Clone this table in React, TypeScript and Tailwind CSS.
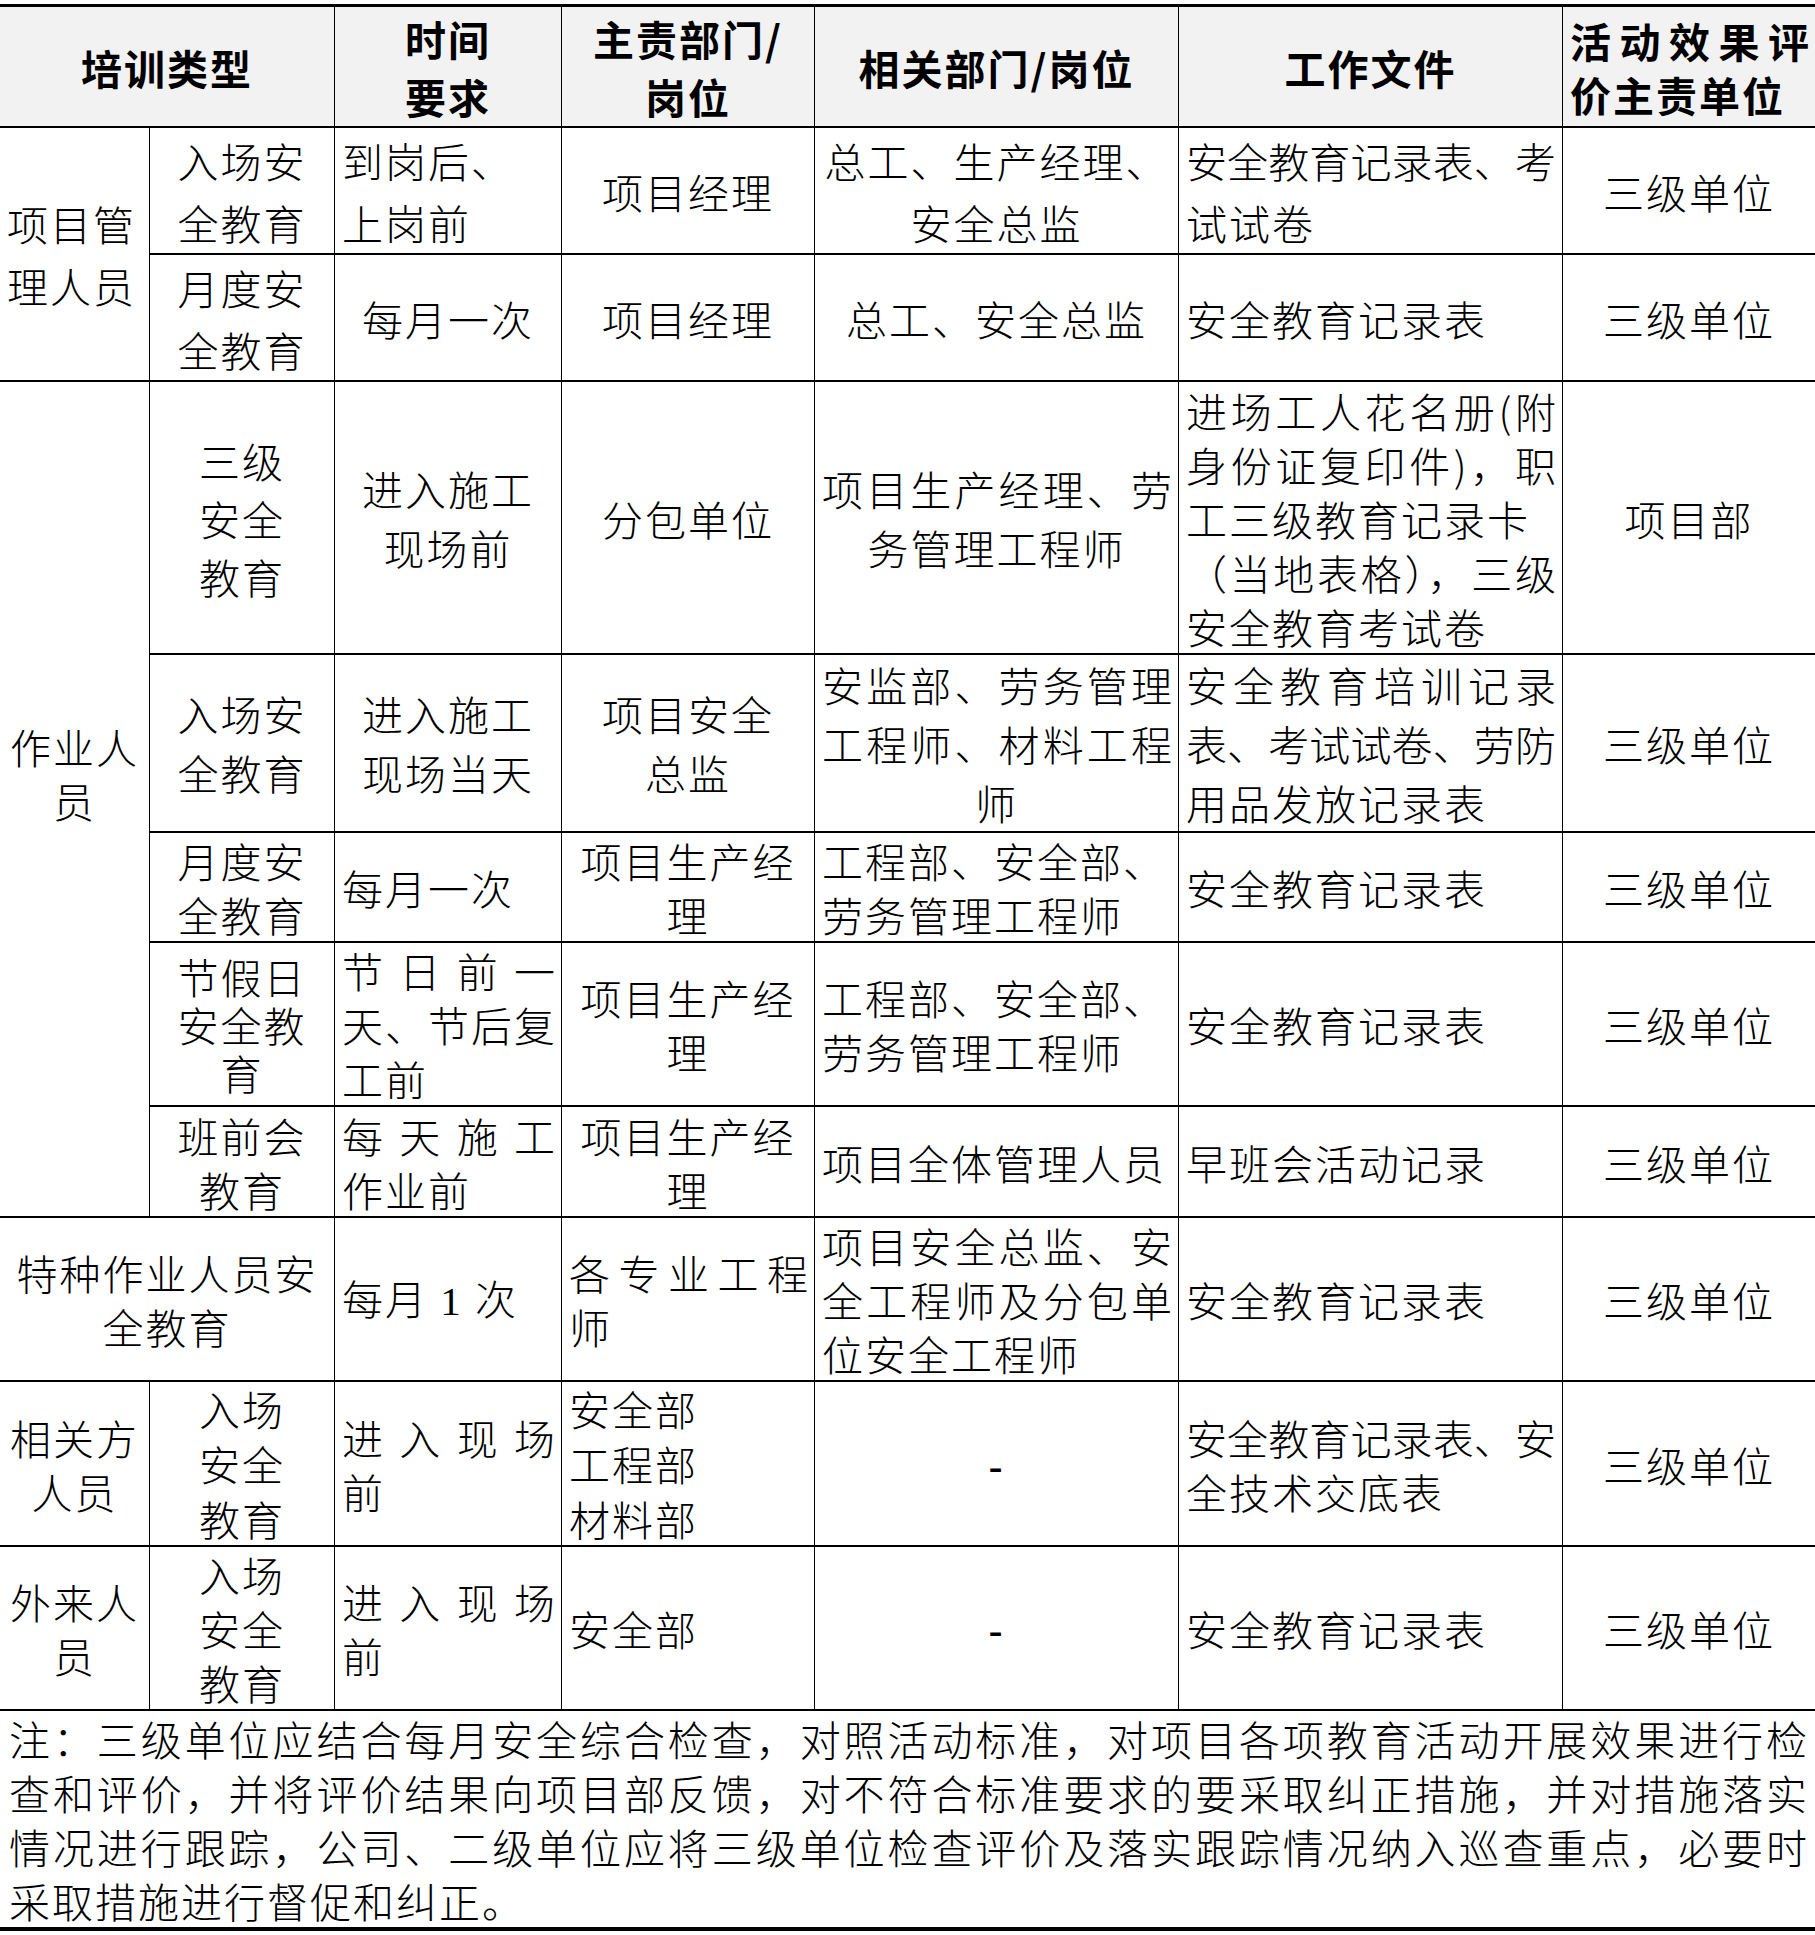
import React from 'react';

type Line = React.ReactNode | { j: string };

const isJustified = (line: Line): line is { j: string } =>
  typeof line === 'object' && line !== null && 'j' in (line as object);

// justified line: spread across the whole cell width, like the Word table
const TextLine = ({ line }: { line: Line }) => {
  if (isJustified(line)) {
    return <div className="text-justify [text-align-last:justify] tracking-[-1px]">{line.j}</div>;
  }
  return <div className="whitespace-nowrap">{line}</div>;
};

type CellProps = {
  lines: Line[];
  left?: boolean;
  last?: boolean;
  head?: boolean;
  lh?: string;
  className?: string;
};

const Cell = ({ lines, left, last, head, lh = 'leading-[54px]', className = '' }: CellProps) => (
  <div
    className={`flex flex-col justify-center px-[7px] border-b-2 border-black ${last ? '' : 'border-r'} ${
      left ? 'text-left' : 'text-center'
    } ${head ? 'bg-[#f2f2f2] font-bold' : ''} ${lh} ${className}`}
  >
    {lines.map((line, i) => (
      <TextLine key={i} line={line} />
    ))}
  </div>
);

const One = () => (
  <>
    每月<span className="font-['Liberation_Serif',serif]"> 1 </span>次
  </>
);

const Dash = () => <span className="font-['Liberation_Serif',serif] font-bold">-</span>;

const note = [
  { j: '注：三级单位应结合每月安全综合检查，对照活动标准，对项目各项教育活动开展效果进行检' },
  { j: '查和评价，并将评价结果向项目部反馈，对不符合标准要求的要采取纠正措施，并对措施落实' },
  { j: '情况进行跟踪，公司、二级单位应将三级单位检查评价及落实跟踪情况纳入巡查重点，必要时' },
  '采取措施进行督促和纠正。',
];

export default function App() {
  return (
    <div className="w-[1815px] min-h-[1935px] bg-white pt-[4px] text-black text-[41px] tracking-[2px] font-light font-['Noto_Sans_CJK_SC',sans-serif]">
      <div className="grid grid-cols-[150px_185px_227px_253px_364px_384px_252px] grid-rows-[121px_127px_127px_273px_178px_110px_164px_111px_164px_165px_164px_216px] border-t-[3px] border-b-4 border-black">
        {/* 表头 */}
        <Cell head className="col-span-2" lines={['培训类型']} />
        <Cell head lh="leading-[58px]" lines={['时间', '要求']} />
        <Cell head lh="leading-[58px]" lines={['主责部门/', '岗位']} />
        <Cell head lines={['相关部门/岗位']} />
        <Cell head lines={['工作文件']} />
        <Cell head last left lines={[{ j: '活动效果评' }, '价主责单位']} />

        {/* 项目管理人员 */}
        <Cell className="row-span-2" left lh="leading-[62px]" lines={['项目管', '理人员']} />
        <Cell lh="leading-[62px]" lines={['入场安', '全教育']} />
        <Cell left lh="leading-[62px]" lines={['到岗后、', '上岗前']} />
        <Cell lines={['项目经理']} />
        <Cell lh="leading-[62px]" lines={['总工、生产经理、', '安全总监']} />
        <Cell left lh="leading-[62px]" lines={[{ j: '安全教育记录表、考' }, '试试卷']} />
        <Cell last lines={['三级单位']} />

        <Cell lh="leading-[62px]" lines={['月度安', '全教育']} />
        <Cell lines={['每月一次']} />
        <Cell lines={['项目经理']} />
        <Cell lines={['总工、安全总监']} />
        <Cell left lines={['安全教育记录表']} />
        <Cell last lines={['三级单位']} />

        {/* 作业人员 */}
        <Cell className="row-span-5 pb-[52px]" lines={['作业人', '员']} />
        <Cell lh="leading-[58px]" lines={['三级', '安全', '教育']} />
        <Cell lh="leading-[59px]" lines={['进入施工', '现场前']} />
        <Cell lines={['分包单位']} />
        <Cell lh="leading-[59px]" lines={[{ j: '项目生产经理、劳' }, '务管理工程师']} />
        <Cell
          left
          lines={[
            { j: '进场工人花名册(附' },
            { j: '身份证复印件)，职' },
            '工三级教育记录卡',
            { j: '（当地表格），三级' },
            '安全教育考试卷',
          ]}
        />
        <Cell last lines={['项目部']} />

        <Cell lh="leading-[59px]" lines={['入场安', '全教育']} />
        <Cell lh="leading-[59px]" lines={['进入施工', '现场当天']} />
        <Cell lh="leading-[59px]" lines={['项目安全', '总监']} />
        <Cell lh="leading-[59px]" lines={[{ j: '安监部、劳务管理' }, { j: '工程师、材料工程' }, '师']} />
        <Cell left lh="leading-[59px]" lines={[{ j: '安全教育培训记录' }, { j: '表、考试试卷、劳防' }, '用品发放记录表']} />
        <Cell last lines={['三级单位']} />

        <Cell lines={['月度安', '全教育']} />
        <Cell left lines={['每月一次']} />
        <Cell lines={['项目生产经', '理']} />
        <Cell left lines={['工程部、安全部、', '劳务管理工程师']} />
        <Cell left lines={['安全教育记录表']} />
        <Cell last lines={['三级单位']} />

        <Cell lh="leading-[48px]" lines={['节假日', '安全教', '育']} />
        <Cell left lines={[{ j: '节日前一' }, { j: '天、节后复' }, '工前']} />
        <Cell lines={['项目生产经', '理']} />
        <Cell left lines={['工程部、安全部、', '劳务管理工程师']} />
        <Cell left lines={['安全教育记录表']} />
        <Cell last lines={['三级单位']} />

        <Cell lines={['班前会', '教育']} />
        <Cell left lines={[{ j: '每天施工' }, '作业前']} />
        <Cell lines={['项目生产经', '理']} />
        <Cell left lines={['项目全体管理人员']} />
        <Cell left lines={['早班会活动记录']} />
        <Cell last lines={['三级单位']} />

        {/* 特种作业人员 */}
        <Cell className="col-span-2" lines={['特种作业人员安', '全教育']} />
        <Cell left lines={[<One key="1" />]} />
        <Cell left lines={[{ j: '各专业工程' }, '师']} />
        <Cell left lines={[{ j: '项目安全总监、安' }, { j: '全工程师及分包单' }, '位安全工程师']} />
        <Cell left lines={['安全教育记录表']} />
        <Cell last lines={['三级单位']} />

        {/* 相关方人员 */}
        <Cell lines={['相关方', '人员']} />
        <Cell lh="leading-[55px]" lines={['入场', '安全', '教育']} />
        <Cell left lines={[{ j: '进入现场' }, '前']} />
        <Cell left lh="leading-[55px]" lines={['安全部', '工程部', '材料部']} />
        <Cell lines={[<Dash key="d" />]} />
        <Cell left lines={[{ j: '安全教育记录表、安' }, '全技术交底表']} />
        <Cell last lines={['三级单位']} />

        {/* 外来人员 */}
        <Cell lines={['外来人', '员']} />
        <Cell lines={['入场', '安全', '教育']} />
        <Cell left lines={[{ j: '进入现场' }, '前']} />
        <Cell left lines={['安全部']} />
        <Cell lines={[<Dash key="d" />]} />
        <Cell left lines={['安全教育记录表']} />
        <Cell last lines={['三级单位']} />

        {/* 注 */}
        <div className="col-span-7 flex flex-col justify-center px-[9px] leading-[54px] text-left">
          {note.map((line, i) => (
            <TextLine key={i} line={line} />
          ))}
        </div>
      </div>
    </div>
  );
}
